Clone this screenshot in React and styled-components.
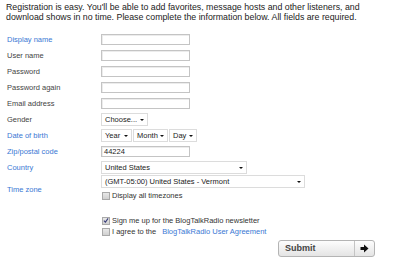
import React from "react";
import styled, { createGlobalStyle } from "styled-components";

const GlobalStyle = createGlobalStyle`
  body {
    margin: 0;
    background: #fff;
    font-family: "Liberation Sans", Arial, sans-serif;
    color: #333;
  }
`;

const Page = styled.div`
  width: 399px;
  height: 269px;
  overflow: hidden;
  padding: 2px 0 0 6px;
  box-sizing: border-box;
`;

const Intro = styled.p`
  margin: 0 0 9px;
  font-size: 8.8px;
  line-height: 10px;
  color: #222;
  width: 385px;
`;

const Form = styled.div`
  display: flex;
  flex-direction: column;
  padding-left: 1px;
`;

const Row = styled.div`
  display: flex;
  align-items: ${(p) => (p.$top ? "flex-start" : "center")};
  height: ${(p) => p.$h || 16}px;
`;

const Label = styled.div`
  width: 94px;
  flex: none;
  font-size: 7.5px;
  color: ${(p) => (p.$blue ? "#3a78d4" : "#444")};
  padding-top: ${(p) => p.$pt || 0}px;
`;

const Field = styled.div`
  display: flex;
  flex-direction: column;
  gap: ${(p) => p.$gap || 0}px;
  padding-top: ${(p) => p.$pt || 0}px;
`;

const TextInput = styled.div`
  width: 89px;
  height: 11px;
  box-sizing: border-box;
  border: 1px solid #c4c4c4;
  box-shadow: inset 1px 1px 0 #ececec;
  background: #fff;
  font-size: 7.5px;
  line-height: 9px;
  padding-left: 2px;
  color: #222;
`;

const SelectGroup = styled.div`
  display: flex;
  gap: 1px;
`;

const Select = styled.div`
  position: relative;
  width: ${(p) => p.$w}px;
  height: 13px;
  box-sizing: border-box;
  border: 1px solid #dcdcdc;
  background: #fff;
  font-size: 7.5px;
  line-height: 11px;
  padding-left: 3px;
  color: #222;
  &::after {
    content: "";
    position: absolute;
    right: 3px;
    top: 5px;
    border-left: 2px solid transparent;
    border-right: 2px solid transparent;
    border-top: 2.5px solid #111;
  }
`;

const CheckRow = styled.label`
  display: flex;
  align-items: center;
  gap: 2px;
  font-size: 7.5px;
  color: #333;
  height: 11px;
`;

const Box = styled.span`
  width: 8px;
  height: 8px;
  box-sizing: border-box;
  border: 1px solid #a9a9a9;
  background: linear-gradient(#e8e8e8, #d0d0d0);
  display: inline-flex;
  align-items: center;
  justify-content: center;
  margin-left: 1px;
  flex: none;
`;

const Link = styled.a`
  color: #3a78d4;
  text-decoration: none;
  margin-left: 4px;
`;

const Actions = styled.div`
  display: flex;
  justify-content: flex-end;
  width: 368px;
  margin-top: 3px;
`;

const SubmitButton = styled.button`
  width: 97px;
  height: 17px;
  padding: 0;
  display: flex;
  align-items: stretch;
  border: 1px solid #b4b4b4;
  border-radius: 3px;
  background: linear-gradient(#fdfdfd, #e4e4e4);
  font-family: "Liberation Sans", Arial, sans-serif;
  font-weight: bold;
  font-size: 9px;
  color: #444;
  cursor: pointer;
`;

const ButtonText = styled.span`
  flex: 1;
  text-align: left;
  padding-left: 6px;
  line-height: 15px;
`;

const ButtonIcon = styled.span`
  width: 19px;
  border-left: 1px solid #c4c4c4;
  display: flex;
  align-items: center;
  justify-content: center;
`;

const Check = () => (
  <svg width="7" height="7" viewBox="0 0 7 7">
    <path d="M1 3.6 L2.8 5.4 L6 1" fill="none" stroke="#3a3f7a" strokeWidth="1.3" />
  </svg>
);

const Arrow = () => (
  <svg width="9" height="9" viewBox="0 0 9 9">
    <path d="M0.5 3 H4 V0.5 L8.5 4.5 L4 8.5 V6 H0.5 Z" fill="#111" />
  </svg>
);

const textRows = [
  ["Display name", true],
  ["User name", false],
  ["Password", false],
  ["Password again", false],
  ["Email address", false],
];

export default function App() {
  return (
    <>
      <GlobalStyle />
      <Page>
        <Intro>
          Registration is easy. You'll be able to add favorites, message hosts and other listeners, and
          download shows in no time. Please complete the information below. All fields are required.
        </Intro>
        <Form>
          {textRows.map(([label, blue]) => (
            <Row key={label}>
              <Label $blue={blue}>{label}</Label>
              <TextInput />
            </Row>
          ))}
          <Row>
            <Label>Gender</Label>
            <Select $w={47}>Choose...</Select>
          </Row>
          <Row>
            <Label $blue>Date of birth</Label>
            <SelectGroup>
              <Select $w={31}>Year</Select>
              <Select $w={35}>Month</Select>
              <Select $w={28}>Day</Select>
            </SelectGroup>
          </Row>
          <Row>
            <Label $blue>Zip/postal code</Label>
            <TextInput>44224</TextInput>
          </Row>
          <Row>
            <Label $blue>Country</Label>
            <Select $w={146}>United States</Select>
          </Row>
          <Row $h={37} $top>
            <Label $blue $pt={10}>Time zone</Label>
            <Field $gap={2}>
              <Select $w={204}>(GMT-05:00) United States - Vermont</Select>
              <CheckRow>
                <Box />
                Display all timezones
              </CheckRow>
            </Field>
          </Row>
          <Row $h={25} $top>
            <Label />
            <Field $pt={3}>
              <CheckRow>
                <Box>
                  <Check />
                </Box>
                Sign me up for the BlogTalkRadio newsletter
              </CheckRow>
              <CheckRow>
                <Box />
                I agree to the
                <Link href="#">BlogTalkRadio User Agreement</Link>
              </CheckRow>
            </Field>
          </Row>
          <Actions>
            <SubmitButton>
              <ButtonText>Submit</ButtonText>
              <ButtonIcon>
                <Arrow />
              </ButtonIcon>
            </SubmitButton>
          </Actions>
        </Form>
      </Page>
    </>
  );
}
